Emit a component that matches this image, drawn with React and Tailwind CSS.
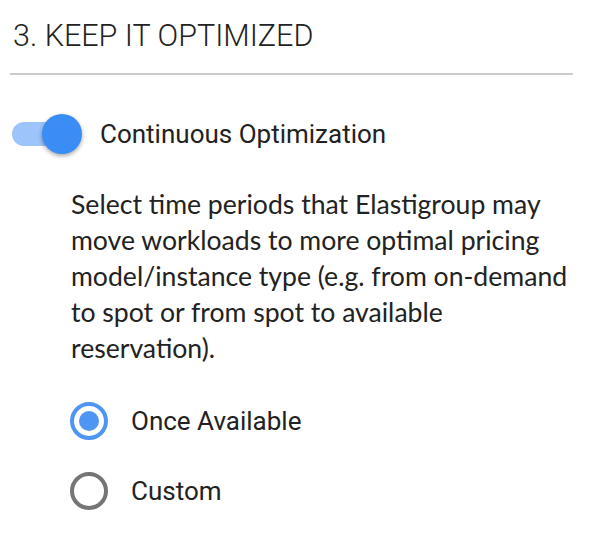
export default function App() {
  return (
    <div className="w-[594px] h-[548px] bg-white overflow-hidden" style={{ fontFamily: "Roboto, 'Liberation Sans', sans-serif" }}>
      <div className="pl-[13px] pt-[15px] text-[30.5px] font-light text-[#222] leading-[42px]">
        3. KEEP IT OPTIMIZED
      </div>
      <div className="mx-[10px] mt-[16px] h-[2px] bg-[#cccccc] w-[563px]" />
      <div className="flex items-center mt-[39px] ml-[12px] h-[40px]">
        <div className="relative w-[70px] h-[40px]">
          <div className="absolute left-0 top-[8px] w-[64px] h-[24px] rounded-full bg-[#9dc4fb]" />
          <div className="absolute left-[30px] top-0 w-[40px] h-[40px] rounded-full bg-[#3a8df5] shadow-[0_2px_4px_rgba(0,0,0,0.35)]" />
        </div>
        <div className="ml-[18px] text-[26px] text-[#222] leading-none">Continuous Optimization</div>
      </div>
      <p className="ml-[71px] mt-[32px] w-[515px] text-[26.6px] leading-[36px] text-[#222]" style={{ fontFamily: "Lato, sans-serif" }}>
        Select time periods that Elastigroup may move workloads to more optimal pricing model/instance type (e.g. from on-demand to spot or from spot to available reservation).
      </p>
      <div className="ml-[70px] mt-[36px] flex flex-col gap-[32px]">
        <div className="flex items-center h-[38px]">
          <div className="w-[38px] h-[38px] rounded-full border-[4px] border-[#4f95f4] flex items-center justify-center">
            <div className="w-[20px] h-[20px] rounded-full bg-[#4f95f4]" />
          </div>
          <span className="ml-[23px] text-[26px] text-[#222] leading-none">Once Available</span>
        </div>
        <div className="flex items-center h-[38px]">
          <div className="w-[38px] h-[38px] rounded-full border-[4px] border-[#757575]" />
          <span className="ml-[23px] text-[26px] text-[#222] leading-none">Custom</span>
        </div>
      </div>
    </div>
  );
}
